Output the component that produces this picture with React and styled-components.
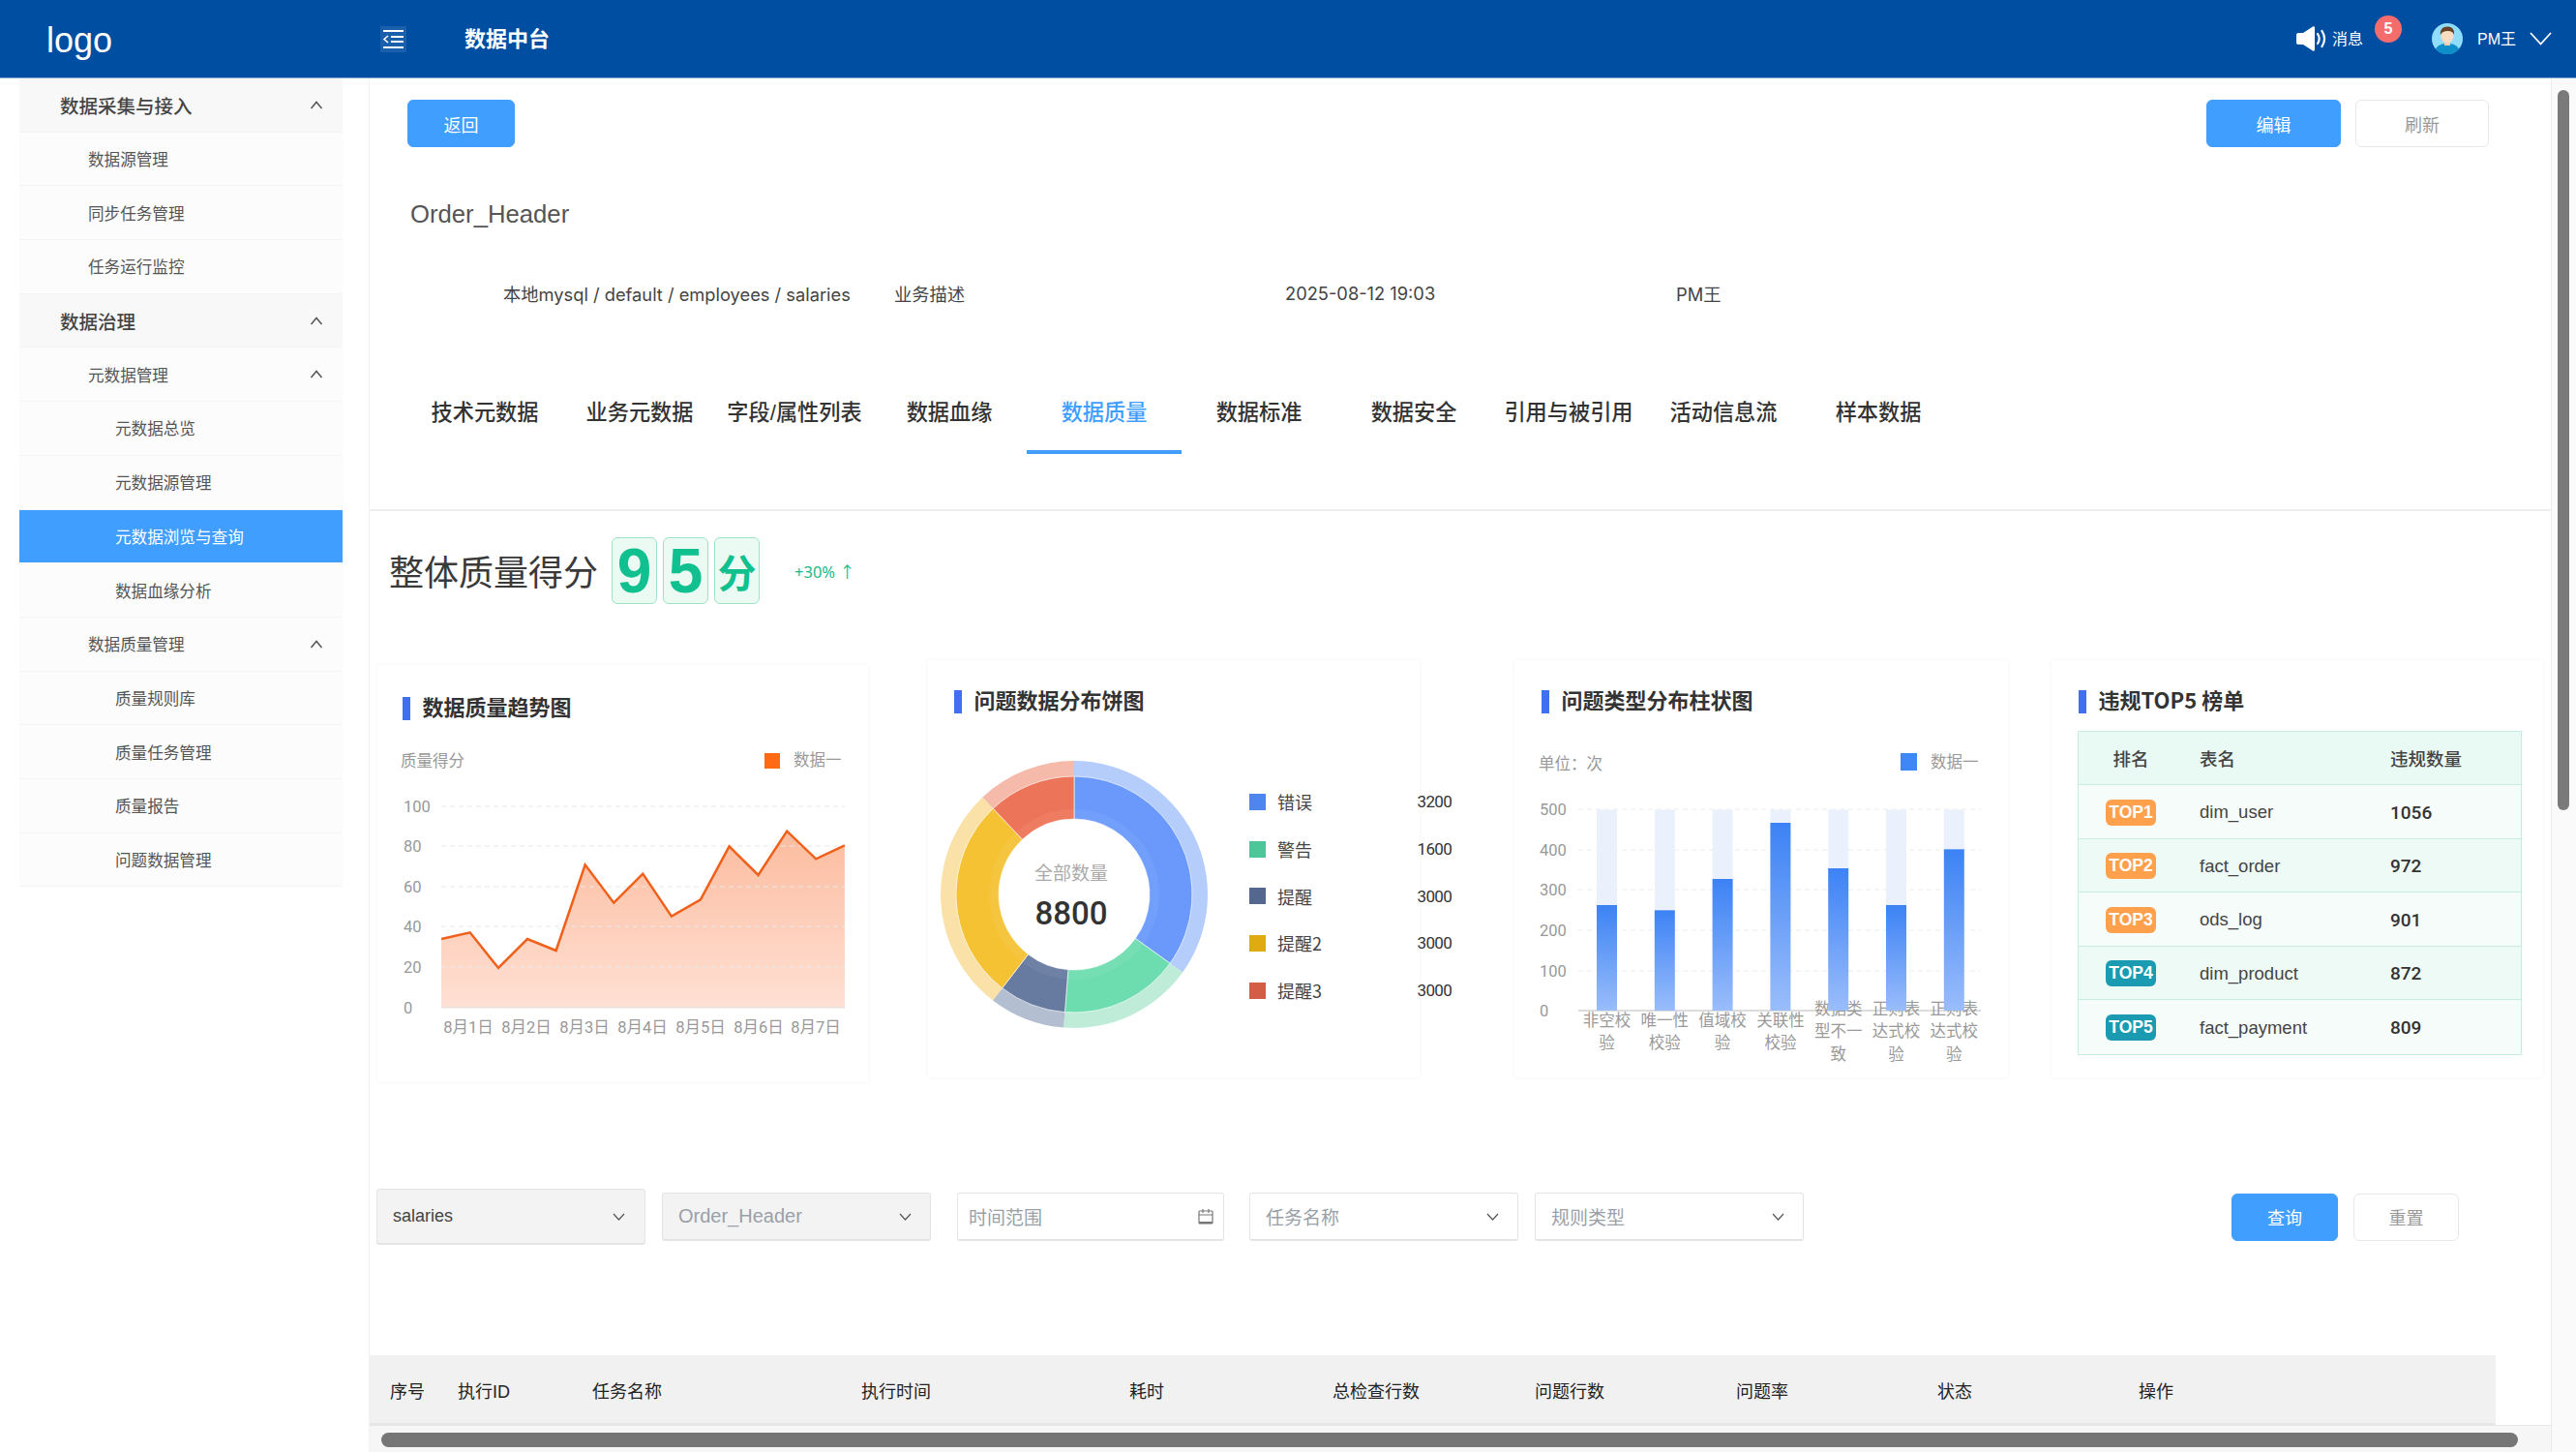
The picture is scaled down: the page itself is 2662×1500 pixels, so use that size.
import React from 'react'
import styled, { createGlobalStyle } from 'styled-components'

const GlobalStyle = createGlobalStyle`
  html, body {
    margin: 0;
    padding: 0;
    background: #ffffff;
  }
  body {
    font-family: "Liberation Sans", "Noto Sans CJK SC", sans-serif;
    color: #333333;
  }
  * {
    box-sizing: border-box;
  }
`

const Page = styled.div`
  width: 2662px;
  height: 1500px;
  display: flex;
  flex-direction: column;
  overflow: hidden;
`

const Header = styled.header`
  height: 81px;
  flex: none;
  display: flex;
  align-items: center;
  background-color: #004ea2;
  border-bottom: 1px solid #7fa6d1;
  color: #ffffff;
`

const Logo = styled.div`
  width: 393px;
  padding-left: 48px;
  font-size: 36px;
  line-height: 1;
  margin-top: 4px;
`

const MenuButton = styled.div`
  width: 27px;
  height: 27px;
  background-color: #1a5fab;
  display: flex;
  align-items: center;
  justify-content: center;
`

const HeaderTitle = styled.div`
  margin: -4px 0 0 60px;
  font-family: "Noto Sans CJK SC", sans-serif;
  font-size: 22px;
  font-weight: 700;
`

const HeaderRight = styled.div`
  margin-left: auto;
  display: flex;
  align-items: center;
  padding-right: 25px;
`

const Message = styled.div`
  display: flex;
  align-items: center;
  gap: 6px;
  font-family: "Noto Sans CJK SC", sans-serif;
  font-size: 16px;
`

const MessageText = styled.span`
  margin-top: -2px;
`

const Badge = styled.span`
  width: 28px;
  height: 28px;
  border-radius: 50%;
  margin: -20px 0 0 12px;
  background-color: #f56c6c;
  display: flex;
  align-items: center;
  justify-content: center;
  font-size: 16px;
  font-weight: 700;
`

const UserName = styled.span`
  margin: -2px 14px 0 15px;
  font-size: 16px;
`

const AvatarWrap = styled.div`
  margin-left: 31px;
  width: 32px;
  height: 32px;
  display: flex;
`

const Body = styled.div`
  flex: 1;
  min-height: 0;
  display: flex;
`

const Sidebar = styled.nav`
  width: 382px;
  flex: none;
  padding: 0 27px 0 20px;
  border-right: 1px solid #f2f2f2;
`

const SideRow = styled.div`
  height: 55.7px;
  display: flex;
  align-items: center;
  justify-content: space-between;
  padding-left: ${(p) => [42, 71, 99][p.$level]}px;
  padding-right: 20px;
  font-size: ${(p) => (p.$level === 0 ? 19.5 : 16.6)}px;
  font-weight: ${(p) => (p.$level === 0 ? 500 : 400)};
  color: ${(p) => (p.$active ? '#ffffff' : p.$level === 0 ? '#444444' : '#555555')};
  background-color: ${(p) => (p.$active ? '#409eff' : p.$level === 0 ? '#f8f8f9' : '#fcfcfc')};
  border-bottom: 1px solid #f4f4f4;
`

const ContentCol = styled.div`
  width: 2254px;
  flex: none;
  display: flex;
  flex-direction: column;
`

const Main = styled.main`
  flex: 1;
  min-height: 0;
  overflow: hidden;
`

const Toolbar = styled.div`
  display: flex;
  align-items: flex-start;
  gap: 15px;
  padding: 22px 64px 0 39px;
`

const Button = styled.button`
  width: ${(p) => p.$w}px;
  height: 49px;
  margin-left: ${(p) => (p.$push ? 'auto' : '0')};
  border-radius: 6px;
  border: 1px solid ${(p) => (p.$primary ? '#409eff' : '#e8e8e8')};
  background-color: ${(p) => (p.$primary ? '#409eff' : '#ffffff')};
  color: ${(p) => (p.$primary ? '#ffffff' : '#999999')};
  font-family: "Noto Sans CJK SC", sans-serif;
  font-size: 18px;
  padding: 0;
`

const AssetTitle = styled.h1`
  margin: 49px 0 0 42px;
  height: 40px;
  line-height: 40px;
  font-size: 25.7px;
  font-weight: 400;
  color: #555555;
`

const MetaRow = styled.div`
  display: flex;
  margin-top: 50px;
  padding-left: 138px;
  height: 24px;
  align-items: center;
  font-family: "Inter", "Noto Sans CJK SC", sans-serif;
  font-size: 18.3px;
  color: #444444;
`

const MetaItem = styled.span`
  width: 404px;
`

const Tabs = styled.div`
  display: flex;
  margin-top: 70px;
  padding-left: 39px;
`

const Tab = styled.div`
  width: 160px;
  height: 84px;
  padding-bottom: 2px;
  display: flex;
  align-items: center;
  justify-content: center;
  font-size: 22.2px;
  font-weight: 500;
  white-space: nowrap;
  color: ${(p) => (p.$active ? '#409eff' : '#333333')};
  border-bottom: 4px solid ${(p) => (p.$active ? '#409eff' : 'transparent')};
`

const ScoreSection = styled.section`
  margin-top: 57px;
  border-top: 2px solid #eeeeee;
  padding: 27px 0 0 20px;
  display: flex;
  align-items: center;
`

const ScoreLabel = styled.span`
  font-family: "Noto Sans CJK SC", sans-serif;
  font-size: 36px;
  color: #3a3a3a;
  margin: -2px 14px 0 0;
`

const ScoreBox = styled.span`
  width: 47px;
  height: 69px;
  margin-right: 6px;
  display: flex;
  align-items: center;
  justify-content: center;
  border: 1px solid #9fe3c5;
  border-radius: 6px;
  background-color: #ebfaf3;
  color: #10c08e;
  font-weight: 700;
  font-size: ${(p) => (p.$small ? 40 : 64)}px;
`

const ScoreTrend = styled.span`
  margin-left: 30px;
  font-family: "Noto Sans", "Noto Sans CJK SC", sans-serif;
  font-size: 16.5px;
  color: #19b98a;
`

const CardRow = styled.div`
  display: flex;
  align-items: flex-start;
  margin-top: 58px;
`

const Card = styled.section`
  width: ${(p) => p.$w}px;
  height: 431px;
  flex: none;
  margin-left: ${(p) => p.$left}px;
  margin-top: ${(p) => p.$top || 0}px;
  padding-top: ${(p) => (p.$top ? 33 : 31)}px;
  background-color: #ffffff;
  box-shadow: 0 0 4px rgba(0, 0, 0, 0.05);
`

const CardTitle = styled.h2`
  margin: 0 0 0 ${(p) => p.$left}px;
  height: 24px;
  display: flex;
  align-items: flex-start;
  gap: 13px;
  font-family: "Noto Sans CJK SC", sans-serif;
  font-size: 22px;
  line-height: 19px;
  font-weight: 700;
  color: #333333;
  &::before {
    content: '';
    width: 7.5px;
    height: 24px;
    background-color: #3f70f0;
  }
`

const ChartSvg = styled.svg`
  display: block;
  margin-top: ${(p) => p.$top || 0}px;
  overflow: visible;
`

const AxisText = styled.text`
  font-family: "Roboto", "Noto Sans CJK SC", sans-serif;
  font-size: 16.5px;
  fill: #999999;
`

const CenterLabel = styled.text`
  font-family: "Noto Sans CJK SC", sans-serif;
  font-size: 19px;
  fill: #aaaaaa;
`

const CenterValue = styled.text`
  font-family: "Roboto", sans-serif;
  font-size: 33px;
  font-weight: 500;
  fill: #333333;
`

const PieBody = styled.div`
  display: flex;
  align-items: flex-start;
`

const PieLegend = styled.ul`
  width: 209px;
  flex: none;
  list-style: none;
  padding: 0;
  margin: 67px 0 0 12px;
`

const PieLegendRow = styled.li`
  height: 48.7px;
  display: flex;
  align-items: center;
  font-family: "Noto Sans CJK SC", sans-serif;
  font-size: 18px;
  color: #444444;
`

const Swatch = styled.i`
  width: 17px;
  height: 17px;
  margin-right: 12px;
  background-color: ${(p) => p.$color};
`

const PieValue = styled.span`
  margin-left: auto;
  font-family: "Roboto", sans-serif;
  font-size: 17px;
  letter-spacing: -0.7px;
  color: #333333;
`

const RankTable = styled.div`
  margin: 18px 0 0 27px;
  width: 459px;
  border: 1px solid #c6eee0;
`

const RankRow = styled.div`
  height: ${(p) => (p.$head ? 55 : 55.5)}px;
  padding-top: ${(p) => (p.$head ? 0 : 2)}px;
  display: grid;
  grid-template-columns: 125px 197px 1fr;
  align-items: center;
  font-size: 18.5px;
  color: #444444;
  font-weight: ${(p) => (p.$head ? 500 : 400)};
  background-color: ${(p) => (p.$head ? '#e9f9f3' : p.$alt ? '#eefaf5' : '#f6fcfa')};
  border-bottom: ${(p) => (p.$last ? 'none' : '1px solid #c6eee0')};
`

const RankCell = styled.div`
  padding-right: 17px;
  display: flex;
  justify-content: center;
`

const RankBadge = styled.span`
  width: 52px;
  height: 27px;
  border-radius: 6px;
  display: flex;
  align-items: center;
  justify-content: center;
  font-size: 17.5px;
  font-weight: 700;
  color: #ffffff;
  background-color: ${(p) => p.$color};
`

const RankCount = styled.span`
  font-family: "Roboto", sans-serif;
  font-weight: 500;
  font-size: 19px;
  color: #333333;
`

const RankHeadCount = styled.span`
  font-weight: 500;
`

const FilterRow = styled.div`
  display: flex;
  align-items: center;
  height: 58px;
  margin-top: 110px;
  padding: 0 95px 0 7px;
`

const Field = styled.div`
  width: ${(p) => p.$w || 278}px;
  height: ${(p) => (p.$tall ? 58 : 50)}px;
  flex: none;
  margin-left: ${(p) => p.$left || 0}px;
  padding: 0 ${(p) => p.$right || 19}px 0 ${(p) => p.$pad || 16}px;
  display: flex;
  align-items: center;
  justify-content: space-between;
  font-size: ${(p) => p.$size || 19}px;
  border: 1px solid #e4e4e4;
  border-bottom-width: 2px;
  border-radius: 3px;
  color: ${(p) => p.$color || '#9aa0a8'};
  background-color: ${(p) => (p.$disabled ? '#f3f3f3' : '#ffffff')};
`

const FilterButton = styled(Button)`
  margin-left: ${(p) => (p.$push ? 'auto' : '16px')};
`

const TableHead = styled.div`
  display: grid;
  grid-template-columns: 70px 139px 278px 277px 210px 209px 208px 208px 208px 1fr;
  align-items: center;
  height: 72px;
  margin: 114px 57px 0 0;
  padding: 2px 0 0 21px;
  background-color: #f1f1f1;
  border-bottom: 2px solid #e6e6e6;
  font-size: 18px;
  color: #222222;
`

const HTrack = styled.div`
  height: 28px;
  flex: none;
  padding: 7px 34px 6px 12px;
  background-color: #f6f6f6;
  border-top: 1px solid #e8e8e8;
`

const HThumb = styled.div`
  height: 15px;
  border-radius: 8px;
  background-color: #767676;
`

const VTrack = styled.div`
  width: 26px;
  flex: none;
  padding: 12px 7px 0 6px;
  background-color: #fafafa;
  border-left: 1px solid #ececec;
`

const VThumb = styled.div`
  height: 744px;
  border-radius: 7px;
  background-color: #7a7a7a;
`

const ChevronUp = () => (
  <svg width="14" height="9" viewBox="0 0 14 9" fill="none" stroke="#555" strokeWidth="1.5">
    <path d="M1.5 8L7 1.5 12.5 8" />
  </svg>
)

const ChevronDown = () => (
  <svg width="13" height="8" viewBox="0 0 13 8" fill="none" stroke="#555" strokeWidth="1.2">
    <path d="M1 1l5.5 6L12 1" />
  </svg>
)

const CalendarIcon = () => (
  <svg width="16" height="17" viewBox="0 0 16 17" fill="none" stroke="#777" strokeWidth="1.2">
    <rect x="1" y="3" width="14" height="13" rx="1" />
    <path d="M1 7h14M5 1v4M11 1v4" />
    <path d="M1 15h14" strokeWidth="2" />
  </svg>
)

const MenuIcon = () => (
  <svg width="23" height="21" viewBox="0 0 23 21" fill="none" stroke="#fff" strokeWidth="2">
    <path d="M1 2h21M1 19h21M9 8h13M9 13h13" />
    <path d="M6 7l-4 3.5L6 14" strokeWidth="1.6" />
  </svg>
)

const SpeakerIcon = () => (
  <svg width="31" height="26" viewBox="0 0 31 26" fill="#fff">
    <path d="M0 9c0-1 .8-2 2-2h5L17 .5c1-.6 2 0 2 1.200V24.300c0 1.200-1 1.800-2 1.200L7 19H2c-1.200 0-2-1-2-2z" />
    <path d="M22 8c2 3 2 7 0 10" fill="none" stroke="#fff" strokeWidth="2.200" strokeLinecap="round" />
    <path d="M26.500 5c3.200 5 3.200 11 0 16" fill="none" stroke="#fff" strokeWidth="2.200" strokeLinecap="round" />
  </svg>
)

const Avatar = () => (
  <svg width="32" height="32" viewBox="0 0 32 32">
    <circle cx="16" cy="16" r="16" fill="#8fdcfb" />
    <path d="M4 27c2-5 7-6 12-6s10 1 12 6a16 16 0 0 1-24 0z" fill="#0e8fc9" />
    <rect x="13" y="17" width="6" height="6" fill="#f7cfae" />
    <ellipse cx="16" cy="13" rx="6.500" ry="7.500" fill="#fbdcc0" />
    <path d="M9 12c-1-6 3-9 8-8.500 4 .3 7 3.500 5.800 8.500-.8-3-2.800-4-6.800-4-3 0-5.500 1-7 4z" fill="#6b4226" />
  </svg>
)

const UserChevron = () => (
  <svg width="23" height="14" viewBox="0 0 23 14" fill="none" stroke="#fff" strokeWidth="1.800">
    <path d="M1 1l10.500 11.500L22 1" />
  </svg>
)

const menuList = [
  { name: '数据采集与接入', level: 0, open: true },
  { name: '数据源管理', level: 1 },
  { name: '同步任务管理', level: 1 },
  { name: '任务运行监控', level: 1 },
  { name: '数据治理', level: 0, open: true },
  { name: '元数据管理', level: 1, open: true },
  { name: '元数据总览', level: 2 },
  { name: '元数据源管理', level: 2 },
  { name: '元数据浏览与查询', level: 2, active: true },
  { name: '数据血缘分析', level: 2 },
  { name: '数据质量管理', level: 1, open: true },
  { name: '质量规则库', level: 2 },
  { name: '质量任务管理', level: 2 },
  { name: '质量报告', level: 2 },
  { name: '问题数据管理', level: 2 }
]

const tabList = ['技术元数据', '业务元数据', '字段/属性列表', '数据血缘', '数据质量', '数据标准', '数据安全', '引用与被引用', '活动信息流', '样本数据']

const tableColumns = ['序号', '执行ID', '任务名称', '执行时间', '耗时', '总检查行数', '问题行数', '问题率', '状态', '操作']

const TrendChart = () => {
  // 图上的坐标按页面像素记，viewBox 对齐卡片位置
  const raw = [[213, 900], [296, 880], [378, 990], [462, 900], [545, 936], [629, 670], [712, 788], [796, 698], [879, 830], [963, 778], [1046, 613], [1130, 702], [1213, 566], [1297, 652], [1380, 610]]
  const points = raw.map(([x, y]) => [380 + x / 2.8, 670 + y / 3])
  const line = points.map((p) => p.join(',')).join(' ')
  const ticks = [[100, 833], [80, 874], [60, 916], [40, 957], [20, 999], [0, 1041]]
  const days = [484, 544, 604, 664, 724, 784, 843]
  return (
    <ChartSvg width="507" height="355" viewBox="390 763 507 355" $top={19}>
      <defs>
        <linearGradient id="trendFill" x1="0" y1="833" x2="0" y2="1041" gradientUnits="userSpaceOnUse">
          <stop offset="0" stopColor="#fbb797" />
          <stop offset="1" stopColor="#ffe0d4" />
        </linearGradient>
      </defs>
      <AxisText x="414" y="792">质量得分</AxisText>
      <rect x="790" y="778" width="16" height="16" fill="#ff6a13" />
      <AxisText x="820" y="791">数据一</AxisText>
      <polygon points={`456,1041 ${line} 873,1041`} fill="url(#trendFill)" />
      {ticks.map(([label, y]) => (
        <g key={label}>
          <line x1="456" x2="873" y1={y} y2={y} stroke={label === 0 ? '#dddddd' : '#e8e8e8'} strokeDasharray={label === 0 ? '' : '5 4'} />
          <AxisText x="417" y={y + 6}>{label}</AxisText>
        </g>
      ))}
      <polyline points={line} fill="none" stroke="#f0601a" strokeWidth="2.500" />
      {days.map((x, i) => (
        <AxisText key={x} x={x} y="1067" textAnchor="middle">{`8月${i + 1}日`}</AxisText>
      ))}
    </ChartSvg>
  )
}

const pieData = [
  { name: '错误', value: 3200, from: 0, to: 125.7, fill: '#6a99fb', outer: '#b5cdfb', legend: '#4e86f0' },
  { name: '警告', value: 1600, from: 125.7, to: 184.5, fill: '#6ddcae', outer: '#bfecd9', legend: '#4dc79a' },
  { name: '提醒', value: 3000, from: 184.5, to: 217.5, fill: '#677ba0', outer: '#b3bfd1', legend: '#54688f' },
  { name: '提醒2', value: 3000, from: 217.5, to: 316.7, fill: '#f5c233', outer: '#fae1a8', legend: '#e0ab12' },
  { name: '提醒3', value: 3000, from: 316.7, to: 360, fill: '#ec7458', outer: '#f6baaa', legend: '#d45d45' }
]

const arcPath = (cx, cy, r0, r1, from, to) => {
  const pt = (r, deg) => {
    const a = (deg * Math.PI) / 180
    return `${(cx + r * Math.sin(a)).toFixed(2)} ${(cy - r * Math.cos(a)).toFixed(2)}`
  }
  const large = to - from > 180 ? 1 : 0
  return `M${pt(r1, from)}A${r1} ${r1} 0 ${large} 1 ${pt(r1, to)}L${pt(r0, to)}A${r0} ${r0} 0 ${large} 0 ${pt(r0, from)}Z`
}

const Donut = () => (
  <ChartSvg width="320" height="340" viewBox="0 0 320 340" $top={19}>
    {pieData.map((s) => (
      <g key={s.name}>
        <path d={arcPath(151, 168, 122, 138, s.from, s.to)} fill={s.outer} />
        <path d={arcPath(151, 168, 78, 122, s.from, s.to)} fill={s.fill} stroke="#fff" strokeWidth="0.6" />
        <path d={arcPath(151, 168, 78, 88, s.from, s.to)} fill="#fff" fillOpacity="0.06" />
      </g>
    ))}
    <CenterLabel x="148" y="153" textAnchor="middle">全部数量</CenterLabel>
    <CenterValue x="148" y="199" textAnchor="middle">8800</CenterValue>
  </ChartSvg>
)

const barData = [
  { top: 795, label: ['非空校', '验'] },
  { top: 811, label: ['唯一性', '校验'] },
  { top: 714, label: ['值域校', '验'] },
  { top: 540, label: ['关联性', '校验'] },
  { top: 681, label: ['数据类', '型不一', '致'] },
  { top: 795, label: ['正则表', '达式校', '验'] },
  { top: 622, label: ['正则表', '达式校', '验'] }
]

const BarChart = () => {
  const ticks = [[500, 836], [400, 878], [300, 919], [200, 961], [100, 1003], [0, 1044]]
  return (
    <ChartSvg width="510" height="355" viewBox="1565 758 510 355" $top={21}>
      <defs>
        <linearGradient id="barFill" x1="0" y1="0" x2="0" y2="1">
          <stop offset="0" stopColor="#3c82f5" />
          <stop offset="1" stopColor="#9abdfb" />
        </linearGradient>
      </defs>
      <AxisText x="1590" y="795">单位：次</AxisText>
      <rect x="1964" y="778" width="17" height="18" fill="#3f86f7" />
      <AxisText x="1995" y="793">数据一</AxisText>
      {ticks.map(([label, y]) => (
        <g key={label}>
          <line x1="1631" x2="2047" y1={y} y2={y} stroke={label === 0 ? '#dddddd' : '#ececec'} strokeWidth={label === 0 ? 2 : 1} strokeDasharray={label === 0 ? '' : '5 4'} />
          <AxisText x="1591" y={y + 6}>{label}</AxisText>
        </g>
      ))}
      {barData.map((bar, i) => {
        const cx = 1660.5 + i * 59.8
        const startY = bar.label.length === 3 ? 1048 : 1060
        return (
          <g key={i}>
            {bar.label.map((text, n) => (
              <AxisText key={n} x={cx} y={startY + n * 23.300} textAnchor="middle">{text}</AxisText>
            ))}
          </g>
        )
      })}
      {barData.map((bar, i) => {
        const x = 1650 + i * 59.8
        const top = 670 + bar.top / 3
        return (
          <g key={i}>
            <rect x={x} y="836.500" width="21" height={top - 836.500} fill="#eaf1fc" />
            <rect x={x} y={top} width="21" height={1044 - top} fill="url(#barFill)" />
          </g>
        )
      })}
    </ChartSvg>
  )
}

const rankList = [
  { rank: 'TOP1', name: 'dim_user', count: 1056, color: '#ffa14c' },
  { rank: 'TOP2', name: 'fact_order', count: 972, color: '#ffa14c' },
  { rank: 'TOP3', name: 'ods_log', count: 901, color: '#ffa14c' },
  { rank: 'TOP4', name: 'dim_product', count: 872, color: '#1a9bb1' },
  { rank: 'TOP5', name: 'fact_payment', count: 809, color: '#1a9bb1' }
]

export default function App() {
  return (
    <Page>
      <GlobalStyle />
      <Header>
        <Logo>logo</Logo>
        <MenuButton><MenuIcon /></MenuButton>
        <HeaderTitle>数据中台</HeaderTitle>
        <HeaderRight>
          <Message><SpeakerIcon /><MessageText>消息</MessageText></Message>
          <Badge>5</Badge>
          <AvatarWrap><Avatar /></AvatarWrap>
          <UserName>PM王</UserName>
          <UserChevron />
        </HeaderRight>
      </Header>
      <Body>
        <Sidebar>
          {menuList.map((item) => (
            <SideRow key={item.name} $level={item.level} $active={item.active}>
              {item.name}
              {item.open && <ChevronUp />}
            </SideRow>
          ))}
        </Sidebar>
        <ContentCol>
          <Main>
            <Toolbar>
              <Button $primary $w={111}>返回</Button>
              <Button $primary $push $w={139}>编辑</Button>
              <Button $w={138}>刷新</Button>
            </Toolbar>
            <AssetTitle>Order_Header</AssetTitle>
            <MetaRow>
              <MetaItem>本地mysql / default / employees / salaries</MetaItem>
              <MetaItem>业务描述</MetaItem>
              <MetaItem>2025-08-12 19:03</MetaItem>
              <MetaItem>PM王</MetaItem>
            </MetaRow>
            <Tabs>
              {tabList.map((name) => (
                <Tab key={name} $active={name === '数据质量'}>{name}</Tab>
              ))}
            </Tabs>
            <ScoreSection>
              <ScoreLabel>整体质量得分</ScoreLabel>
              <ScoreBox>9</ScoreBox>
              <ScoreBox>5</ScoreBox>
              <ScoreBox $small>分</ScoreBox>
              <ScoreTrend>+30% ↑</ScoreTrend>
            </ScoreSection>
            <CardRow>
              <Card $w={507} $left={8} $top={5}>
                <CardTitle $left={26}>数据质量趋势图</CardTitle>
                <TrendChart />
              </Card>
              <Card $w={508} $left={62}>
                <CardTitle $left={27}>问题数据分布饼图</CardTitle>
                <PieBody>
                  <Donut />
                  <PieLegend>
                    {pieData.map((s) => (
                      <PieLegendRow key={s.name}>
                        <Swatch $color={s.legend} />
                        {s.name}
                        <PieValue>{s.value}</PieValue>
                      </PieLegendRow>
                    ))}
                  </PieLegend>
                </PieBody>
              </Card>
              <Card $w={510} $left={98}>
                <CardTitle $left={28}>问题类型分布柱状图</CardTitle>
                <BarChart />
              </Card>
              <Card $w={508} $left={45}>
                <CardTitle $left={28}>违规TOP5 榜单</CardTitle>
                <RankTable>
                  <RankRow $head>
                    <RankCell>排名</RankCell>
                    <span>表名</span>
                    <RankHeadCount>违规数量</RankHeadCount>
                  </RankRow>
                  {rankList.map((row, i) => (
                    <RankRow key={row.rank} $alt={i % 2 === 1} $last={i === rankList.length - 1}>
                      <RankCell><RankBadge $color={row.color}>{row.rank}</RankBadge></RankCell>
                      <span>{row.name}</span>
                      <RankCount>{row.count}</RankCount>
                    </RankRow>
                  ))}
                </RankTable>
              </Card>
            </CardRow>
            <FilterRow>
              <Field $tall $disabled $color="#444444" $size={18} $right={20}><span>salaries</span><ChevronDown /></Field>
              <Field $left={17} $disabled $size={20}><span>Order_Header</span><ChevronDown /></Field>
              <Field $left={27} $w={276} $pad={11} $right={10}><span>时间范围</span><CalendarIcon /></Field>
              <Field $left={26}><span>任务名称</span><ChevronDown /></Field>
              <Field $left={17}><span>规则类型</span><ChevronDown /></Field>
              <FilterButton $primary $push $w={110}>查询</FilterButton>
              <FilterButton $w={109}>重置</FilterButton>
            </FilterRow>
            <TableHead>
              {tableColumns.map((name) => (
                <span key={name}>{name}</span>
              ))}
            </TableHead>
          </Main>
          <HTrack><HThumb /></HTrack>
        </ContentCol>
        <VTrack><VThumb /></VTrack>
      </Body>
    </Page>
  )
}
